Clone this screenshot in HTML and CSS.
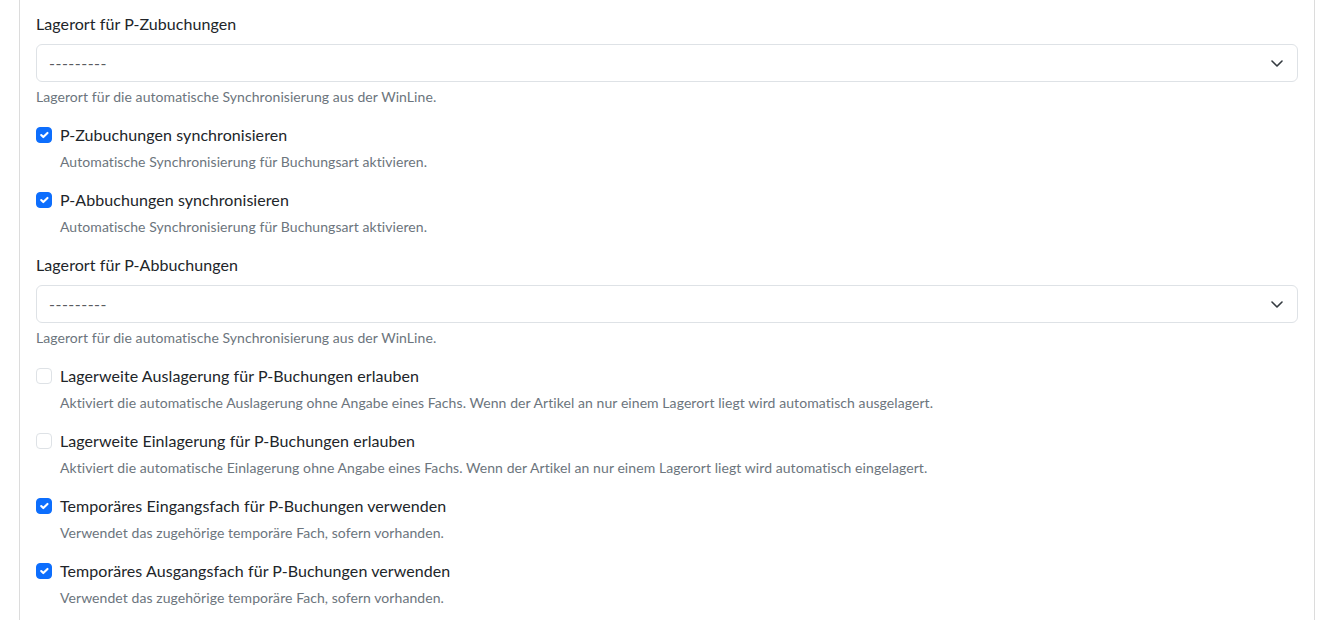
FILE: index.html
```html
<!DOCTYPE html>
<html lang="de">
<head>
<meta charset="utf-8">
<title>Einstellungen</title>
<link rel="stylesheet" href="styles.css">
</head>
<body>
<div class="page">
  <div class="card">
    <div class="card-body">
      <div class="field">
        <label class="form-label">Lagerort für P-Zubuchungen</label>
        <div class="select">
          <span class="select-value">---------</span>
          <svg class="chevron" viewBox="0 0 12 7" width="12" height="7"><path d="M1 1l5 5 5-5" fill="none" stroke="#343a40" stroke-width="1.6" stroke-linecap="round" stroke-linejoin="round"/></svg>
        </div>
        <div class="form-text">Lagerort für die automatische Synchronisierung aus der WinLine.</div>
      </div>

      <div class="check">
        <span class="box checked"><svg viewBox="0 0 20 20" width="16" height="16"><path d="m6 10 3 3 6-6" fill="none" stroke="#fff" stroke-width="3" stroke-linecap="round" stroke-linejoin="round"/></svg></span>
        <div class="check-text">
          <label class="check-label">P-Zubuchungen synchronisieren</label>
          <div class="form-text">Automatische Synchronisierung für Buchungsart aktivieren.</div>
        </div>
      </div>

      <div class="check">
        <span class="box checked"><svg viewBox="0 0 20 20" width="16" height="16"><path d="m6 10 3 3 6-6" fill="none" stroke="#fff" stroke-width="3" stroke-linecap="round" stroke-linejoin="round"/></svg></span>
        <div class="check-text">
          <label class="check-label">P-Abbuchungen synchronisieren</label>
          <div class="form-text">Automatische Synchronisierung für Buchungsart aktivieren.</div>
        </div>
      </div>

      <div class="field">
        <label class="form-label">Lagerort für P-Abbuchungen</label>
        <div class="select">
          <span class="select-value">---------</span>
          <svg class="chevron" viewBox="0 0 12 7" width="12" height="7"><path d="M1 1l5 5 5-5" fill="none" stroke="#343a40" stroke-width="1.6" stroke-linecap="round" stroke-linejoin="round"/></svg>
        </div>
        <div class="form-text">Lagerort für die automatische Synchronisierung aus der WinLine.</div>
      </div>

      <div class="check">
        <span class="box"></span>
        <div class="check-text">
          <label class="check-label">Lagerweite Auslagerung für P-Buchungen erlauben</label>
          <div class="form-text">Aktiviert die automatische Auslagerung ohne Angabe eines Fachs. Wenn der Artikel an nur einem Lagerort liegt wird automatisch ausgelagert.</div>
        </div>
      </div>

      <div class="check">
        <span class="box"></span>
        <div class="check-text">
          <label class="check-label">Lagerweite Einlagerung für P-Buchungen erlauben</label>
          <div class="form-text">Aktiviert die automatische Einlagerung ohne Angabe eines Fachs. Wenn der Artikel an nur einem Lagerort liegt wird automatisch eingelagert.</div>
        </div>
      </div>

      <div class="check">
        <span class="box checked"><svg viewBox="0 0 20 20" width="16" height="16"><path d="m6 10 3 3 6-6" fill="none" stroke="#fff" stroke-width="3" stroke-linecap="round" stroke-linejoin="round"/></svg></span>
        <div class="check-text">
          <label class="check-label">Temporäres Eingangsfach für P-Buchungen verwenden</label>
          <div class="form-text">Verwendet das zugehörige temporäre Fach, sofern vorhanden.</div>
        </div>
      </div>

      <div class="check">
        <span class="box checked"><svg viewBox="0 0 20 20" width="16" height="16"><path d="m6 10 3 3 6-6" fill="none" stroke="#fff" stroke-width="3" stroke-linecap="round" stroke-linejoin="round"/></svg></span>
        <div class="check-text">
          <label class="check-label">Temporäres Ausgangsfach für P-Buchungen verwenden</label>
          <div class="form-text">Verwendet das zugehörige temporäre Fach, sofern vorhanden.</div>
        </div>
      </div>
    </div>
  </div>
</div>
</body>
</html>
```

FILE: styles.css
```css
* { box-sizing: border-box; }
html, body { margin: 0; padding: 0; background: #fff; overflow: hidden; }
body {
  font-family: Lato, "Noto Sans", sans-serif;
  font-size: 16px;
  line-height: 1.5;
  color: #212529;
}
.page {
  padding: 0 9px 0 19px;
}
.card {
  border: 1px solid #dcdcdc;
  border-top: none;
  border-bottom: none;
  background: #fff;
}
.card-body {
  padding: 12px 16px 16px;
}
.field { margin-bottom: 16px; }
.form-label {
  display: block;
  margin-bottom: 8px;
  line-height: 24px;
  letter-spacing: 0.08px;
}
.select {
  display: flex;
  align-items: center;
  justify-content: space-between;
  height: 38px;
  border: 1px solid #dee2e6;
  border-radius: 6px;
  padding: 0 14px 0 12px;
}
.select-value { color: #595c5f; font-size: 16px; letter-spacing: 0.5px; }
.chevron { display: block; }
.form-text {
  margin-top: 4px;
  font-size: 14px;
  line-height: 21px;
  color: #6c757d;
  letter-spacing: 0.07px;
}
.check {
  display: flex;
  gap: 8px;
  margin-bottom: 16px;
}
.box {
  flex: none;
  width: 16px;
  height: 16px;
  margin-top: 4px;
  border: 1px solid #dee2e6;
  border-radius: 4px;
  background: #fff;
  display: flex;
  align-items: center;
  justify-content: center;
}
.box.checked {
  background: #0d6efd;
  border-color: #0d6efd;
}
.box svg { display: block; }
.check-text { display: flex; flex-direction: column; }
.check-label { line-height: 24px; letter-spacing: 0.07px; }
```
